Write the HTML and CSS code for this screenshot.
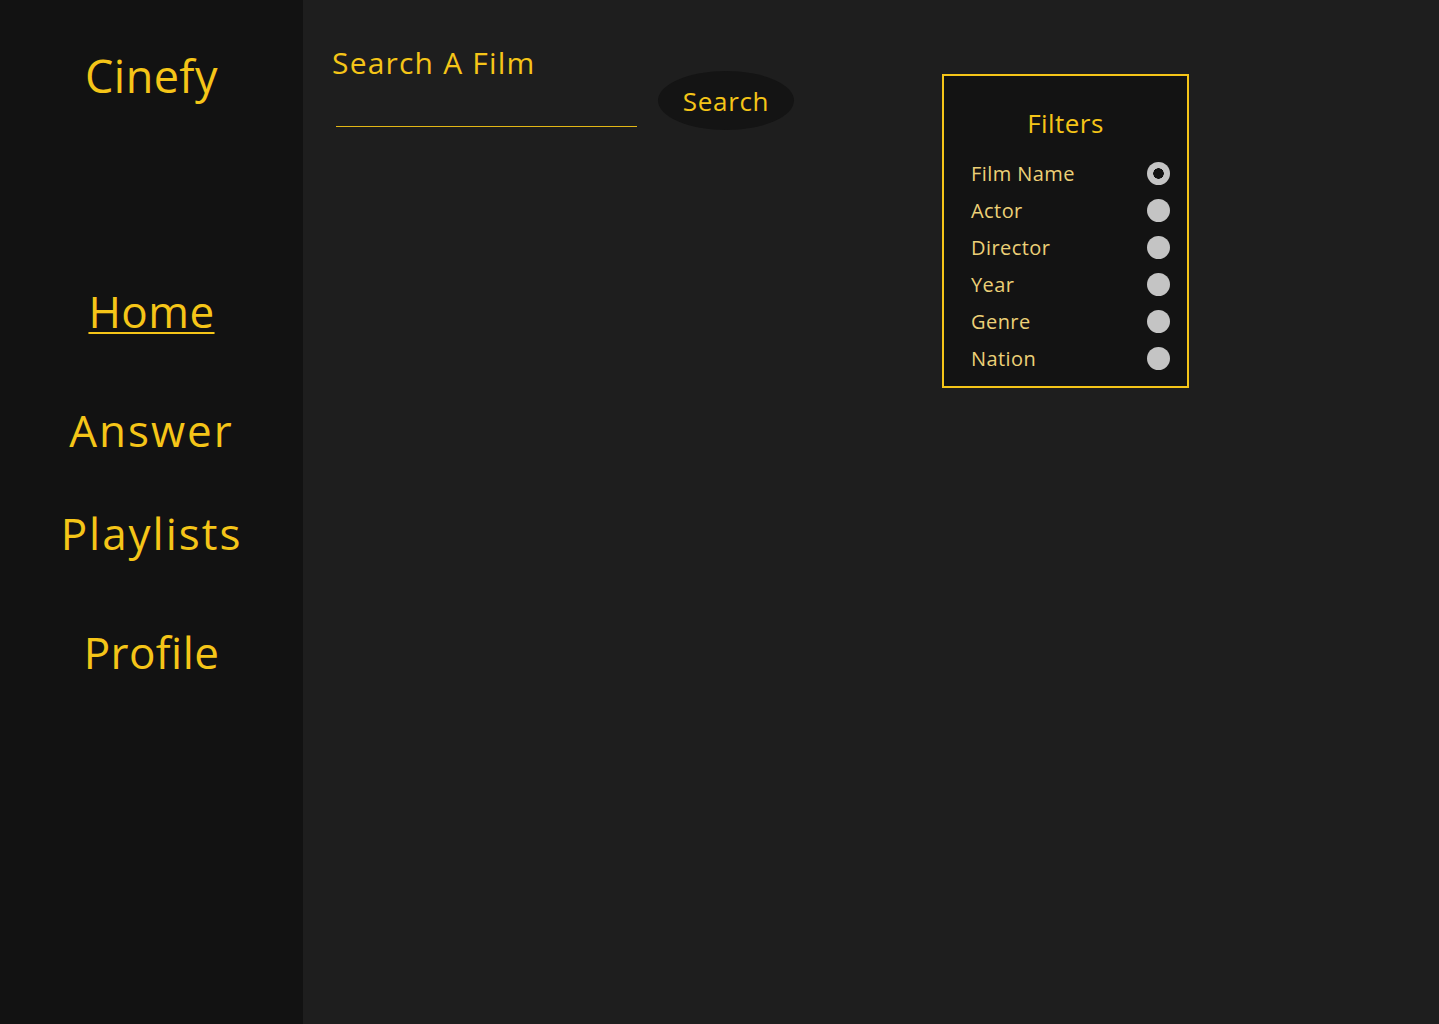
FILE: index.html
```html
<!DOCTYPE html>
<html lang="en">
<head>
<meta charset="utf-8">
<title>Cinefy</title>
<link rel="stylesheet" href="styles.css">
</head>
<body>
<div class="app">
  <aside class="sidebar">
    <div class="logo">Cinefy</div>
    <nav class="nav">
      <a class="nav-link active home" href="#">Home</a>
      <a class="nav-link answer" href="#">Answer</a>
      <a class="nav-link playlists" href="#">Playlists</a>
      <a class="nav-link profile" href="#">Profile</a>
    </nav>
  </aside>
  <main class="main">
    <div class="search-block">
      <label class="search-label" for="q">Search A Film</label>
      <input class="search-input" id="q" type="text">
    </div>
    <button class="search-btn" type="button">Search</button>
    <section class="filters">
      <h2 class="filters-title">Filters</h2>
      <ul class="filter-list">
        <li class="filter-row"><span>Film Name</span><span class="radio checked"></span></li>
        <li class="filter-row"><span>Actor</span><span class="radio"></span></li>
        <li class="filter-row"><span>Director</span><span class="radio"></span></li>
        <li class="filter-row"><span>Year</span><span class="radio"></span></li>
        <li class="filter-row"><span>Genre</span><span class="radio"></span></li>
        <li class="filter-row"><span>Nation</span><span class="radio"></span></li>
      </ul>
    </section>
  </main>
</div>
</body>
</html>
```
FILE: styles.css
```css
* { box-sizing: border-box; }
html, body { margin: 0; padding: 0; height: 100%; }
body {
  background: #1e1e1e;
  font-family: "Open Sans", "Noto Sans", sans-serif;
  color: #f5c518;
  letter-spacing: 0.027em;
}
.app { display: flex; min-height: 1024px; }
.sidebar {
  width: 303px;
  flex: 0 0 303px;
  background: #121212;
  display: flex;
  flex-direction: column;
  align-items: center;
}
.logo {
  font-size: 45px;
  line-height: 60px;
  margin-top: 46px;
  color: #f5c518;
}
.nav { display: flex; flex-direction: column; align-items: center; margin-top: 175px; }
.nav-link {
  color: #f5c518;
  text-decoration: none;
  font-size: 44px;
  line-height: 60px;
}
.nav-link.active { text-decoration: underline; text-decoration-thickness: 2px; text-underline-offset: 4px; }
.answer { margin-top: 59px; letter-spacing: 0.045em; }
.playlists { margin-top: 43px; letter-spacing: 0.045em; }
.profile { margin-top: 59px; }
.main {
  flex: 1;
  display: flex;
  align-items: flex-start;
  padding: 42px 0 0 29px;
}
.search-block { display: flex; flex-direction: column; width: 308px; }
.search-label { font-size: 30px; line-height: 42px; color: #f5c518; letter-spacing: 0.04em; }
.search-input {
  margin: 21px 0 0 4px;
  width: 301px;
  height: 22px;
  background: transparent;
  border: none;
  border-bottom: 1px solid #e3b716;
  outline: none;
  color: #f5c518;
}
.search-btn {
  margin: 29px 0 0 18px;
  width: 136px;
  height: 59px;
  border-radius: 50%;
  background: #141414;
  border: none;
  color: #f5c518;
  font-family: inherit;
  letter-spacing: 0.027em;
  font-size: 26px;
  padding: 0;
}
.filters {
  margin: 32px 0 0 148px;
  width: 247px;
  height: 314px;
  border: 2px solid #f5c518;
  background: #131313;
  padding-top: 29px;
}
.filters-title {
  margin: 0;
  text-align: center;
  font-weight: normal;
  font-size: 26px;
  line-height: 36px;
  color: #f5c518;
}
.filter-list { list-style: none; margin: 14px 0 0; padding: 0 17px 0 27px; }
.filter-row {
  display: flex;
  justify-content: space-between;
  align-items: center;
  height: 37px;
  font-size: 20px;
  color: #ecd077;
}
.radio {
  width: 23px;
  height: 23px;
  border-radius: 50%;
  background: #c4c4c4;
}
.radio.checked { background: radial-gradient(circle, #131313 0 5px, #c4c4c4 5.5px); }
```
